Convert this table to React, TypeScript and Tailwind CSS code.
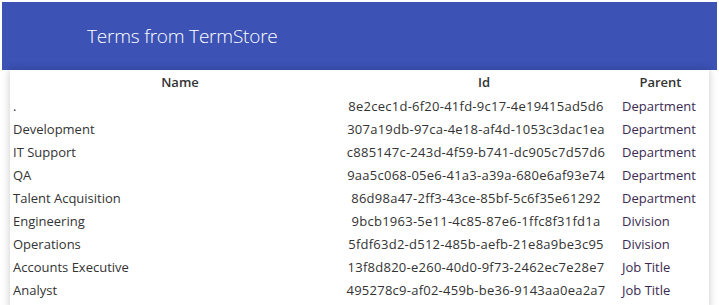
const terms = [
  { name: ".", id: "8e2cec1d-6f20-41fd-9c17-4e19415ad5d6", parent: "Department" },
  { name: "Development", id: "307a19db-97ca-4e18-af4d-1053c3dac1ea", parent: "Department" },
  { name: "IT Support", id: "c885147c-243d-4f59-b741-dc905c7d57d6", parent: "Department" },
  { name: "QA", id: "9aa5c068-05e6-41a3-a39a-680e6af93e74", parent: "Department" },
  { name: "Talent Acquisition", id: "86d98a47-2ff3-43ce-85bf-5c6f35e61292", parent: "Department" },
  { name: "Engineering", id: "9bcb1963-5e11-4c85-87e6-1ffc8f31fd1a", parent: "Division" },
  { name: "Operations", id: "5fdf63d2-d512-485b-aefb-21e8a9be3c95", parent: "Division" },
  { name: "Accounts Executive", id: "13f8d820-e260-40d0-9f73-2462ec7e28e7", parent: "Job Title" },
  { name: "Analyst", id: "495278c9-af02-459b-be36-9143aa0ea2a7", parent: "Job Title" },
];

export default function App() {
  return (
    <div className="min-h-screen bg-white p-[2px] font-['Open_Sans',sans-serif]">
      {/* Banner */}
      <div className="h-[68px] bg-[#3c52b4] flex items-center pl-[85px]">
        <h1 className="text-white text-[19px] font-light tracking-[-0.2px]">Terms from TermStore</h1>
      </div>

      {/* Terms table */}
      <div className="mx-[8px] bg-white shadow-[0_0_8px_rgba(0,0,0,0.22)] pb-2">
        <table className="w-full text-[13px] text-[#333] border-collapse">
          <thead>
            <tr className="h-[25px]">
              <th className="w-[328px] font-semibold text-center pl-[12px]">Name</th>
              <th className="w-[276px] font-semibold text-center pl-[16px]">Id</th>
              <th className="font-semibold text-center pr-[2px]">Parent</th>
            </tr>
          </thead>
          <tbody>
            {terms.map((t) => (
              <tr key={t.id} className="h-[23px]">
                <td className="pl-[3px] text-left">{t.name}</td>
                <td className="text-center tracking-[0.25px]">{t.id}</td>
                <td className="pl-[8px] text-left text-[#3a2a52]">{t.parent}</td>
              </tr>
            ))}
          </tbody>
        </table>
      </div>
    </div>
  );
}
